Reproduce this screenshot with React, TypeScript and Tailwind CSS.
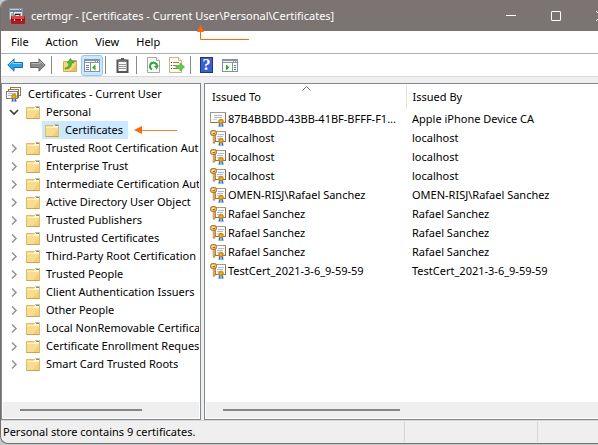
import type { ReactNode } from "react";

const folders = [
  "Trusted Root Certification Authorities",
  "Enterprise Trust",
  "Intermediate Certification Authorities",
  "Active Directory User Object",
  "Trusted Publishers",
  "Untrusted Certificates",
  "Third-Party Root Certification Authorities",
  "Trusted People",
  "Client Authentication Issuers",
  "Other People",
  "Local NonRemovable Certificates",
  "Certificate Enrollment Requests",
  "Smart Card Trusted Roots",
];

const certificates = [
  { to: "87B4BBDD-43BB-41BF-BFFF-F1...", by: "Apple iPhone Device CA", key: false },
  { to: "localhost", by: "localhost", key: true },
  { to: "localhost", by: "localhost", key: true },
  { to: "localhost", by: "localhost", key: true },
  { to: "OMEN-RISJ\\Rafael Sanchez", by: "OMEN-RISJ\\Rafael Sanchez", key: true },
  { to: "Rafael Sanchez", by: "Rafael Sanchez", key: true },
  { to: "Rafael Sanchez", by: "Rafael Sanchez", key: true },
  { to: "Rafael Sanchez", by: "Rafael Sanchez", key: true },
  { to: "TestCert_2021-3-6_9-59-59", by: "TestCert_2021-3-6_9-59-59", key: true },
];

function AppIcon() {
  return (
    <svg width="16" height="16" viewBox="0 0 16 16" className="shrink-0">
      <rect x="0" y="0" width="14" height="12" fill="#8794a0" />
      <rect x="1" y="1" width="9" height="1" fill="#c5d2dc" />
      <path d="M11 1h1v1h-1zM1 4h3v7H1zM5 4h8v7H5z" fill="#e7edf2" />
      <path d="M1 3h12M2 6h2M2 8h2M6 6h6" stroke="#4d6a86" />
      <path d="M6 8V6.5h5V8" fill="none" stroke="#5a1414" />
      <rect x="2" y="8" width="14" height="8" rx="1" fill="#b3191c" />
      <rect x="3" y="8" width="12" height="3" fill="#dc4646" />
      <path d="M2 11.5h14" stroke="#7c0e12" />
      <path d="M5 11h1v2H5zM12 11h1v2h-1z" fill="#e6dede" />
    </svg>
  );
}

function Folder() {
  return (
    <svg width="14" height="13" viewBox="0 0 14 13" className="shrink-0">
      <path d="M.5 12.500V1.500h8l1-1h4v12z" fill="#f8dc8f" stroke="#e0bb66" />
      <path d="M7 12 13 5v7z" fill="#efc76d" opacity=".6" />
      <path d="M9 1h4v2H8z" fill="#fffdf2" />
      <path d="M10 1.500h3" stroke="#4d9bdc" />
      <path d="M1 3.500h12" fill="none" stroke="#fff0bd" />
      <path d="M.5 12.500h13" stroke="#cda44e" />
    </svg>
  );
}

function Seal({ x, y }: { x: number; y: number }) {
  return (
    <g transform={`translate(${x} ${y})`}>
      <path d="M1 4h1.500v4L1.500 7.500.5 8zM3.500 4H5l.5 4-1-.5-1 .5z" fill="#1f6fd8" />
      <circle cx="3" cy="2.500" r="2.700" fill="#c98a12" />
      <circle cx="3" cy="2.500" r="1.200" fill="#e9b436" />
    </g>
  );
}

function CertIcon({ withKey }: { withKey: boolean }) {
  return (
    <svg width="16" height="16" viewBox="0 0 16 16" className="shrink-0">
      <rect x={withKey ? 5.5 : 0.5} y="1.5" width={withKey ? 10 : 15} height="10" fill="#fdfcf7" stroke="#a79b80" />
      <path d={withKey ? "M5 11.500h11M15.500 2v10" : "M1 11.500h15M15.500 2v10"} stroke="#80745e" />
      <path d={withKey ? "M8 4.500h6M7 6.500h6" : "M4 4.500h8M4 6.500h8"} stroke="#a9b9e6" />
      <path d={withKey ? "M7 8.500h2" : "M3 8.500h4"} stroke="#c9cfe4" />
      <Seal x={8} y={8} />
      {withKey && (
        <g>
          <path d="M4 5v8.500" stroke="#b97c3a" strokeWidth="2.400" />
          <path d="M4 5v7.500" stroke="#f3bd68" strokeWidth="1.200" />
          <path d="M5 8.500h1M5 10.500h1" stroke="#b97422" />
          <rect x=".5" y=".5" width="6" height="5" rx="2" fill="#f1b765" stroke="#a9702c" />
          <path d="M2 2.500h2" stroke="#fff3d7" />
          <path d="M3 3.500h2" stroke="#99602a" />
        </g>
      )}
    </svg>
  );
}

function CertStack() {
  return (
    <svg width="16" height="16" viewBox="0 0 16 16" className="shrink-0">
      <rect x="4.500" y="1.500" width="10" height="8" fill="#fffef8" stroke="#8d7a55" />
      <rect x="2.500" y="3.500" width="10" height="8" fill="#fffef8" stroke="#8d7a55" />
      <rect x=".5" y="5.500" width="11" height="7" fill="#fdfcf7" stroke="#8d7a55" />
      <path d="M2 7.500h8M2 9.500h4" stroke="#a9b9e6" />
      <Seal x={5} y={8} />
    </svg>
  );
}

function Chevron({ open = false }: { open?: boolean }) {
  return (
    <svg width="10" height="10" viewBox="0 0 10 10" className="shrink-0">
      {open ? (
        <path d="M1 3l4 4 4-4" fill="none" stroke="#3c3c3c" strokeWidth="1.700" />
      ) : (
        <path d="M3 1.500l4 4-4 4" fill="none" stroke="#929292" strokeWidth="1.500" />
      )}
    </svg>
  );
}

function WindowIcon({ side }: { side: "left" | "right" }) {
  return (
    <svg width="16" height="13" viewBox="0 0 16 13">
      <rect x=".5" y=".5" width="15" height="12" fill="#fff" stroke="#87919b" />
      <path d="M1 1h14v3H1z" fill="#8a96a2" />
      <path d="M1 2.500h10M12 2.500h1M14 2.500h1" stroke="#eef2f5" />
      {side === "left" ? (
        <>
          <path d="M6.500 4v8" stroke="#87919b" />
          <path d="M2 6.500h3M2 8.500h3M2 10.500h3" stroke="#6b7c8d" />
          <path d="M11.500 5.500v6l-3.500-3z" fill="#35a91e" />
        </>
      ) : (
        <>
          <path d="M10.500 4v8" stroke="#87919b" />
          <path d="M12 6.500h2M12 8.500h2M12 10.500h2" stroke="#4d79b5" />
          <path d="M4 5.500v6l3.500-3z" fill="#35a91e" />
        </>
      )}
    </svg>
  );
}

function Tool({ label, active = false, children }: { label: string; active?: boolean; children: ReactNode }) {
  return (
    <button
      type="button"
      aria-label={label}
      aria-pressed={active}
      className={
        active
          ? "flex h-[21px] w-[22px] items-center justify-center rounded-[3px] border border-[#90c8f6] bg-[#cce8ff]"
          : "flex h-[21px] w-[23px] items-center justify-center"
      }
    >
      {children}
    </button>
  );
}

function Divider() {
  return <span className="mx-[2px] h-[18px] w-px bg-[#8a8a8a]" />;
}

function Toolbar() {
  return (
    <div role="toolbar" className="flex h-[23px] items-center border-b border-[#dadada] bg-white pl-[2px]">
      <Tool label="Back">
        <svg width="16" height="14" viewBox="0 0 16 14">
          <path d="M.8 7 7 .8v3.700h8.500v5H7v3.700z" fill="#2aa4ea" stroke="#1b6cb0" />
          <path d="M2.500 6.500 6 3v2.500h8.500" fill="none" stroke="#8fd8ff" />
        </svg>
      </Tool>
      <Tool label="Forward">
        <svg width="16" height="14" viewBox="0 0 16 14">
          <path d="M15.200 7 9 .8v3.700H.5v5H9v3.700z" fill="#8b8b8b" stroke="#676767" />
          <path d="M1.500 5.500H10V3l3.500 3.500" fill="none" stroke="#b5b5b5" />
        </svg>
      </Tool>
      <Divider />
      <span className="w-1" />
      <Tool label="Up one level">
        <svg width="14" height="14" viewBox="0 0 14 14">
          <path d="M.5 13.500v-10h6l1.500-1h5.500v11z" fill="#f5d583" stroke="#d3a951" />
          <path d="M9 3.500h4" stroke="#4d9bdc" />
          <path d="M7 13 13 7v6z" fill="#e9bf62" />
          <path d="M2 10c3-.5 4-2 4-5H4l3.500-4.500L11 5H8.500c0 4-2 6-6.500 6z" fill="#4fc02b" stroke="#2d8a18" strokeWidth=".5" />
        </svg>
      </Tool>
      <Tool label="Show console tree" active>
        <WindowIcon side="left" />
      </Tool>
      <Divider />
      <span className="w-[3px]" />
      <Tool label="Copy">
        <svg width="13" height="15" viewBox="0 0 13 15">
          <rect x="1.500" y="2.500" width="10" height="11.500" fill="#fafafa" stroke="#555" strokeWidth="2" />
          <rect x="3" y="1" width="7" height="3" fill="#777" />
          <rect x="5" y="0" width="3" height="2" fill="#555" />
          <path d="M3 6.500h7M3 8.500h7M3 10.500h7" stroke="#999" />
        </svg>
      </Tool>
      <Divider />
      <span className="w-[3px]" />
      <Tool label="Refresh">
        <svg width="13" height="16" viewBox="0 0 13 16">
          <path d="M.5 .5h9l3 3v12H.5z" fill="#fafafa" stroke="#a5a5a5" />
          <path d="M9.500 .5v3h3" fill="#fff" stroke="#a5a5a5" />
          <path d="M5 12.300A3.500 3.500 0 1 1 10 9" fill="none" stroke="#34aa3c" strokeWidth="2" />
          <path d="M12 8.500 9.500 12.500 7 9z" fill="#34aa3c" />
        </svg>
      </Tool>
      <Tool label="Export list">
        <svg width="16" height="16" viewBox="0 0 16 16">
          <path d="M.5 .5h9l3 3v12H.5z" fill="#fffbe5" stroke="#c0b68d" />
          <path d="M9.500 .5v3h3" fill="#fff" stroke="#c0b68d" />
          <path d="M2 5.500h1M2 8.500h1M2 11.500h1" stroke="#333" />
          <path d="M4 5.500h6M4 8.500h3M4 11.500h4" stroke="#83749a" />
          <path d="M7 8.500h4V6l4.500 4-4.500 4v-2.500H7z" fill="#67cc4a" stroke="#45a82e" strokeWidth=".7" />
        </svg>
      </Tool>
      <Divider />
      <span className="w-[2px]" />
      <Tool label="Help">
        <span className="flex h-4 w-[13px] items-center justify-center border border-[#1c348d] bg-[#3b5fcc] font-['Liberation_Serif',serif] text-base font-bold leading-4 text-white">
          ?
        </span>
      </Tool>
      <Tool label="Show action pane">
        <WindowIcon side="right" />
      </Tool>
    </div>
  );
}

function TreeFolder({ label }: { label: string }) {
  return (
    <li role="treeitem" className="flex h-[18px] items-center pl-[6px]">
      <Chevron />
      <span className="ml-[7px] flex min-w-0 flex-1 items-center gap-[6px]">
        <Folder />
        <span className="min-w-0 flex-1 overflow-hidden whitespace-nowrap">{label}</span>
      </span>
    </li>
  );
}

function TreePane() {
  return (
    <nav className="flex w-[200px] shrink-0 flex-col border border-[#828790] bg-white p-px">
      <ul role="tree" className="flex-1 overflow-hidden">
        <li role="treeitem" className="flex h-[18px] items-center gap-[6px] pl-[3px]">
          <CertStack />
          Certificates - Current User
        </li>
        <li role="treeitem" aria-expanded="true" className="flex h-[18px] items-center pl-[6px]">
          <Chevron open />
          <span className="ml-[7px] flex items-center gap-[6px]">
            <Folder />
            Personal
          </span>
        </li>
        <li role="treeitem" aria-selected="true" className="flex h-[18px] items-center pl-[39px]">
          <span className="flex h-[18px] items-center gap-[6px] bg-[#cce8ff] pl-[3px] pr-[5px]">
            <Folder />
            Certificates
          </span>
          <svg width="43" height="8" viewBox="0 0 43 8" className="ml-[6px]">
            <path d="M0 4l8-4v8z" fill="#ff6a00" />
            <path d="M8 4.500h35" stroke="#ff8126" />
          </svg>
        </li>
        {folders.map((label) => (
          <TreeFolder key={label} label={label} />
        ))}
      </ul>
      <div className="flex h-4 items-center bg-[#efefef] pl-[17px]">
        <span className="h-[2px] w-[122px] bg-[#868686]" />
      </div>
    </nav>
  );
}

function ListPane() {
  return (
    <main className="flex min-w-0 flex-1 flex-col border-y border-l border-[#828790] bg-white py-px pl-px">
      <div className="flex-1">
        <table className="w-full table-fixed border-collapse">
          <thead>
            <tr className="h-6">
              <th scope="col" className="relative w-[200px] border-r border-[#e2e2e2] p-0 pl-[6px] text-left font-normal">
                Issued To
                <svg width="9" height="5" viewBox="0 0 9 5" className="absolute left-24 top-px">
                  <path d="M.5 4.500l4-4 4 4" fill="none" stroke="#6b6b6b" />
                </svg>
              </th>
              <th scope="col" className="p-0 pl-[6px] text-left font-normal">
                Issued By
              </th>
            </tr>
          </thead>
          <tbody>
            {certificates.map((cert, i) => (
              <tr key={i} className="h-[19px]">
                <td className="p-0 pl-1">
                  <span className="flex items-center gap-[2px] whitespace-nowrap">
                    <CertIcon withKey={cert.key} />
                    {cert.to}
                  </span>
                </td>
                <td className="p-0 pl-[6px]">{cert.by}</td>
              </tr>
            ))}
          </tbody>
        </table>
      </div>
      <div className="flex h-4 items-center bg-[#efefef] pl-[17px]">
        <span className="h-[2px] w-[177px] bg-[#868686]" />
      </div>
    </main>
  );
}

export default function App() {
  return (
    <div className="min-h-screen bg-[#c4c8c9] pb-px font-['Noto_Sans','Open_Sans',sans-serif] text-[11px] leading-4 text-black">
      <div className="flex min-h-[calc(100vh-1px)] flex-col overflow-hidden rounded-l-lg border-b border-l border-[#757070] bg-[#efefef]">
        <header className="relative flex h-[31px] shrink-0 items-center bg-[#7b7473] pl-2 text-white">
          <AppIcon />
          <h1 className="ml-[6px] flex-1 whitespace-nowrap">certmgr - [Certificates - Current User\Personal\Certificates]</h1>
          <button type="button" aria-label="Minimize" className="flex h-full w-[45px] items-center justify-center">
            <span className="h-px w-[10px] bg-white" />
          </button>
          <button type="button" aria-label="Maximize" className="flex h-full w-[45px] items-center justify-center">
            <span className="h-[10px] w-[10px] rounded-[1px] border border-white" />
          </button>
          <button type="button" aria-label="Close" className="flex h-full w-5 items-center overflow-hidden pl-[18px]">
            <svg width="10" height="10" viewBox="0 0 10 10" className="shrink-0">
              <path d="M0 0l10 10M10 0 0 10" stroke="#fff" />
            </svg>
          </button>
          <svg width="54" height="16" viewBox="0 0 54 16" className="absolute left-[195px] top-[25px]">
            <path d="M4.500 0 8 7H1z" fill="#ff6a00" />
            <path d="M4.500 7v7.500H53" fill="none" stroke="#ff6a00" />
          </svg>
        </header>
        <nav className="flex h-[23px] shrink-0 items-center gap-[17px] border-b border-[#acafb8] bg-white pl-[10px]">
          <button type="button">File</button>
          <button type="button">Action</button>
          <button type="button">View</button>
          <button type="button">Help</button>
        </nav>
        <Toolbar />
        <div className="flex flex-1 gap-[3px] pt-[6px]">
          <TreePane />
          <ListPane />
        </div>
        <footer className="flex h-[23px] shrink-0 items-stretch border-t border-[#d5d5d5] py-px">
          <p className="flex w-[404px] items-center border-r border-[#d5d5d5] pl-[2px]">Personal store contains 9 certificates.</p>
          <span className="w-[133px] border-r border-[#d5d5d5]" />
        </footer>
      </div>
    </div>
  );
}
